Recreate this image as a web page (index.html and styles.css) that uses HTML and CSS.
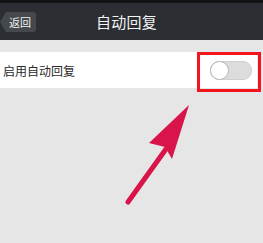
FILE: index.html
```html
<!DOCTYPE html>
<html lang="zh">
<head>
<meta charset="utf-8">
<link rel="stylesheet" href="styles.css">
</head>
<body>
<div class="page">
  <header class="nav">
    <div class="back"><span>返回</span></div>
    <div class="title">自动回复</div>
    <div></div>
  </header>
  <div class="gap"></div>
  <div class="row">
    <span class="label">启用自动回复</span>
    <div class="switch"><div class="knob"></div></div>
  </div>
  <div class="highlight"></div>
  <svg class="arrow" width="263" height="243" viewBox="0 0 263 243">
    <line x1="128" y1="202" x2="166" y2="149" stroke="#d9144a" stroke-width="5" stroke-linecap="round"/>
    <polygon points="189,105 149,143 165,147 172,159" fill="#d9144a"/>
  </svg>
</div>
</body>
</html>
```
FILE: styles.css
```css
html, body {
  margin: 0;
  padding: 0;
}
body {
  width: 263px;
  height: 243px;
  overflow: hidden;
  background: #e6e6e6;
  font-family: "Noto Sans CJK SC", "Noto Sans", sans-serif;
}
.page {
  position: relative;
  width: 263px;
  height: 243px;
}
.nav {
  height: 37px;
  border-top: 3px solid #121314;
  background: #2b2e32;
  display: grid;
  grid-template-columns: 1fr auto 1fr;
  align-items: center;
  padding-right: 10px;
}
.back {
  position: relative;
  justify-self: start;
  margin-left: 6px;
  width: 30px;
  height: 20px;
  background: #45484d;
  border-radius: 0 3px 3px 0;
  display: flex;
  align-items: center;
  justify-content: center;
  color: #f2f2f2;
  font-size: 11px;
}
.back::before {
  content: "";
  position: absolute;
  left: -6px;
  top: 0;
  border-top: 10px solid transparent;
  border-bottom: 10px solid transparent;
  border-right: 6px solid #45484d;
}
.back span {
  margin-left: -2px;
}
.title {
  color: #f4f4f4;
  font-size: 15px;
  letter-spacing: 0.3px;
}
.gap {
  height: 12px;
}
.row {
  height: 36px;
  width: 257px;
  background: #ffffff;
  display: flex;
  align-items: center;
  justify-content: space-between;
  padding-left: 3px;
  box-sizing: border-box;
  padding-right: 5px;
}
.label {
  font-size: 12px;
  color: #2a2a2a;
}
.switch {
  position: relative;
  width: 40px;
  height: 17px;
  border-radius: 9px;
  background: #dcdcdc;
  border: 1px solid #cfcfcf;
  margin-top: 1px;
}
.knob {
  position: absolute;
  left: -1px;
  top: -1px;
  width: 17px;
  height: 17px;
  border-radius: 50%;
  background: #ffffff;
  border: 1px solid #b8b8b8;
}
.highlight {
  position: absolute;
  left: 197px;
  top: 52px;
  width: 58px;
  height: 34px;
  border: 3px solid #f2141e;
}
.arrow {
  position: absolute;
  left: 0;
  top: 0;
}
```
